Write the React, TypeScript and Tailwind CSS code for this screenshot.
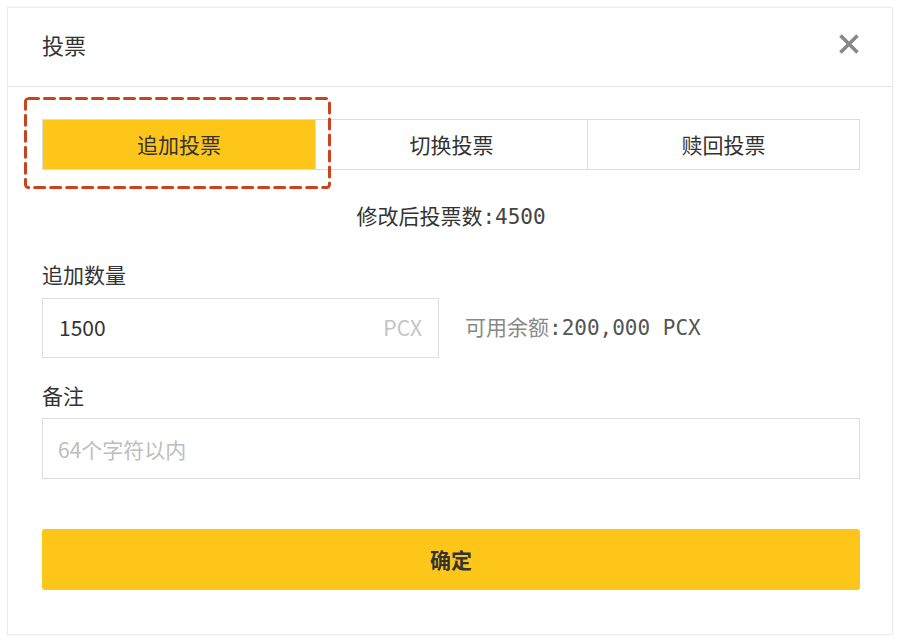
import { useState } from 'react'

const font = { fontFamily: '"Noto Sans CJK SC", "Noto Sans", sans-serif' }
const mono = "font-['DejaVu_Sans_Mono','Noto_Sans_CJK_SC',monospace]"

const tabs = ['追加投票', '切换投票', '赎回投票']

export default function App() {
  const [active, setActive] = useState(0)
  const [amount, setAmount] = useState('1500')
  const [note, setNote] = useState('')

  return (
    <div className="w-[900px] h-[642px] bg-white p-[7px]" style={font}>
      <div className="h-[628px] w-[886px] border border-[#ececec] shadow-[0_0_3px_rgba(0,0,0,0.06)] bg-white flex flex-col">
        <div className="h-[79px] flex items-center justify-between pl-[34px] pr-[32px] pb-[6px] border-b border-[#e3e3e3] shrink-0">
          <h2 className="text-[22px] text-[#333] leading-[30px]">投票</h2>
          <button className="w-[22px] h-[22px] flex items-center justify-center">
            <svg width="22" height="22" viewBox="0 0 22 22">
              <path d="M2.5 2.5 L19.5 19.5 M19.5 2.5 L2.5 19.5" stroke="#888" strokeWidth="3.6" strokeLinecap="butt" />
            </svg>
          </button>
        </div>

        <div className="pl-[34px] pr-[32px] pt-[32px] flex flex-col">
          <div className="relative">
            <div className="grid grid-cols-3 h-[51px] border border-[#dcdcdc]">
              {tabs.map((t, i) => (
                <button
                  key={t}
                  onClick={() => setActive(i)}
                  className={
                    'text-[21px] text-[#333] ' +
                    (i > 0 ? 'border-l border-[#dcdcdc] ' : '') +
                    (active === i ? 'bg-[#ffc61a]' : 'bg-white')
                  }
                >
                  {t}
                </button>
              ))}
            </div>
            <svg className="absolute left-[-18px] top-[-22px] pointer-events-none" width="307" height="92" viewBox="0 0 307 92">
              <rect x="1.5" y="1.5" width="304" height="89" rx="3" fill="none" stroke="#c9431b" strokeWidth="3" strokeDasharray="10 6" strokeLinecap="round" />
            </svg>
          </div>

          <p className="text-center text-[21px] text-[#333] mt-[31px] leading-[28px]">
            修改后投票数<span className={mono + ' text-[#444]'}>:4500</span>
          </p>

          <label className="text-[21px] text-[#333] mt-[29px] leading-[28px]">追加数量</label>
          <div className="flex items-center mt-[10px] gap-[26px]">
            <div className="w-[397px] h-[60px] border border-[#dcdcdc] flex items-center pl-[16px] pr-[16px]">
              <input
                value={amount}
                onChange={e => setAmount(e.target.value)}
                className="flex-1 min-w-0 text-[21px] text-[#333] outline-none bg-transparent"
              />
              <span className="text-[21px] text-[#c4c4c4]">PCX</span>
            </div>
            <span className="text-[21px] text-[#888]">
              可用余额<span className={mono + ' text-[#555]'}>:200,000 PCX</span>
            </span>
          </div>

          <label className="text-[21px] text-[#333] mt-[23px] leading-[28px]">备注</label>
          <input
            value={note}
            onChange={e => setNote(e.target.value)}
            placeholder="64个字符以内"
            className="mt-[9px] h-[61px] border border-[#dcdcdc] px-[15px] text-[21px] text-[#333] placeholder:text-[#bdbdbd] outline-none"
          />

          <button className="mt-[50px] h-[61px] rounded-[3px] bg-[#ffc61a] text-[21px] font-bold text-[#333]">
            确定
          </button>
        </div>
      </div>
    </div>
  )
}
